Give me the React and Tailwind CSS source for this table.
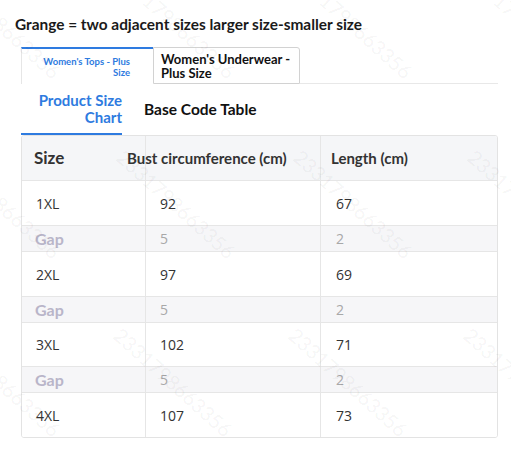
import React from "react";

const marks = [
  "left-[-48px] top-[-34px]",
  "left-[127px] top-[-34px]",
  "left-[304px] top-[-34px]",
  "left-[478px] top-[-34px]",
  "left-[-48px] top-[146px]",
  "left-[127px] top-[146px]",
  "left-[304px] top-[146px]",
  "left-[478px] top-[146px]",
  "left-[-48px] top-[324px]",
  "left-[124px] top-[324px]",
  "left-[299px] top-[324px]",
  "left-[474px] top-[324px]",
];

function DataRow({ size, bust, len, h, last }) {
  return (
    <div className={`flex ${h} ${last ? "" : "border-b border-[#e6e6e6]"} bg-white`}>
      <div className="flex w-[124px] items-center border-r border-[#e6e6e6] pl-[14px] font-['Open_Sans',sans-serif] text-[14px] text-[#333]">
        {size}
      </div>
      <div className="flex w-[175px] items-center border-r border-[#e6e6e6] pl-[14px] font-['Open_Sans',sans-serif] text-[14px] text-[#333]">
        {bust}
      </div>
      <div className="flex flex-1 items-center pl-[15px] font-['Open_Sans',sans-serif] text-[14px] text-[#333]">
        {len}
      </div>
    </div>
  );
}

function GapRow() {
  return (
    <div className="flex h-[26px] border-b border-[#e6e6e6] bg-[#f6f6f8]">
      <div className="flex w-[124px] items-center border-r border-[#e6e6e6] pl-[13px] text-[16px] font-bold text-[#b9b5c9]">
        Gap
      </div>
      <div className="flex w-[175px] items-center border-r border-[#e6e6e6] pl-[14px] font-['Open_Sans',sans-serif] text-[14px] text-[#a8a8a8]">
        5
      </div>
      <div className="flex flex-1 items-center pl-[15px] font-['Open_Sans',sans-serif] text-[14px] text-[#a8a8a8]">
        2
      </div>
    </div>
  );
}

export default function App() {
  return (
    <div className="relative h-[455px] w-[511px] overflow-hidden bg-white font-['Lato',sans-serif] text-[#1a1a1a]">
      <div className="pl-[15px] pt-[15px] text-[15.4px] font-bold leading-[18px] text-[#1a1a1a]">
        Grange = two adjacent sizes larger size-smaller size
      </div>

      <div className="ml-[21px] mt-[14px] flex w-[477px]">
        <div className="flex h-[37px] w-[132px] flex-col items-end justify-center border-l border-t-2 border-l-[#e6e6e6] border-t-[#2e7be0] pr-[23px] text-right text-[9.5px] font-bold leading-[11px] text-[#2e7be0]">
          <span>Women's Tops - Plus</span>
          <span>Size</span>
        </div>
        <div className="flex h-[37px] w-[147px] flex-col justify-center rounded-tr-[3px] border border-[#d2d2d2] pl-[7px] text-[13px] font-bold leading-[14px] text-[#111]">
          <span>Women's Underwear -</span>
          <span>Plus Size</span>
        </div>
        <div className="flex-1 border-b border-[#e8e8e8]"></div>
      </div>

      <div className="ml-[21px] flex h-[51px] items-stretch">
        <div className="flex w-[101px] items-center justify-end border-b-2 border-[#2e7be0] text-right text-[15px] font-bold leading-[17px] text-[#2e7be0]">
          <span>
            Product Size
            <br />
            Chart
          </span>
        </div>
        <div className="ml-[22px] flex items-center text-[15.5px] font-bold text-[#111]">Base Code Table</div>
      </div>

      <div className="ml-[21px] w-[477px] overflow-hidden rounded-[3px] border border-[#e3e3e3]">
        <div className="flex h-[45px] border-b border-[#e6e6e6] bg-[#f5f6f8]">
          <div className="flex w-[124px] items-center border-r border-[#e6e6e6] pl-[12px] text-[17px] font-bold text-[#333]">
            Size
          </div>
          <div className="flex w-[175px] items-center border-r border-[#e6e6e6]">
            <span className="-ml-[19px] whitespace-nowrap text-[15px] font-bold text-[#333]">Bust circumference (cm)</span>
          </div>
          <div className="flex flex-1 items-center pl-[10px] text-[15px] font-bold text-[#333]">Length (cm)</div>
        </div>
        <DataRow size="1XL" bust="92" len="67" h="h-[45px]" />
        <GapRow />
        <DataRow size="2XL" bust="97" len="69" h="h-[45px]" />
        <GapRow />
        <DataRow size="3XL" bust="102" len="71" h="h-[44px]" />
        <GapRow />
        <DataRow size="4XL" bust="107" len="73" h="h-[44px]" last />
      </div>

      {marks.map((m, i) => (
        <span
          key={i}
          aria-hidden="true"
          className={`pointer-events-none absolute ${m} origin-top-left rotate-[42deg] whitespace-nowrap text-[20px] leading-none text-[rgba(0,0,0,0.055)]`}
        >
          2331798663356
        </span>
      ))}
    </div>
  );
}
